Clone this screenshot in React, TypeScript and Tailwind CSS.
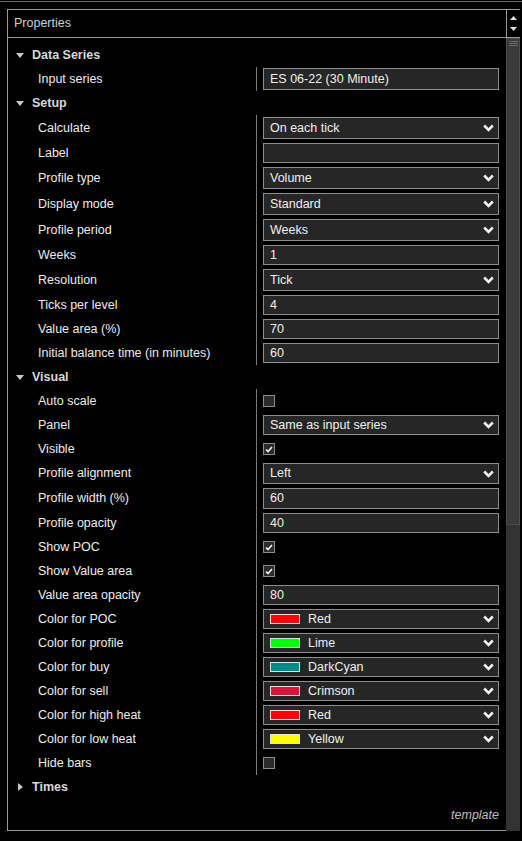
import React from 'react'

type Row =
  | { kind: 'section'; label: string; open: boolean; h: number }
  | { kind: 'text'; label: string; value: string; h: number; box: number }
  | { kind: 'select'; label: string; value: string; h: number; box: number }
  | { kind: 'check'; label: string; checked: boolean; h: number }
  | { kind: 'color'; label: string; value: string; swatch: string; h: number; box: number }

const rows: Row[] = [
  { kind: 'section', label: 'Data Series', open: true, h: 24 },
  { kind: 'text', label: 'Input series', value: 'ES 06-22 (30 Minute)', h: 24, box: 22 },
  { kind: 'section', label: 'Setup', open: true, h: 24 },
  { kind: 'select', label: 'Calculate', value: 'On each tick', h: 26, box: 22 },
  { kind: 'text', label: 'Label', value: '', h: 24, box: 20 },
  { kind: 'select', label: 'Profile type', value: 'Volume', h: 26, box: 22 },
  { kind: 'select', label: 'Display mode', value: 'Standard', h: 26, box: 22 },
  { kind: 'select', label: 'Profile period', value: 'Weeks', h: 26, box: 22 },
  { kind: 'text', label: 'Weeks', value: '1', h: 24, box: 20 },
  { kind: 'select', label: 'Resolution', value: 'Tick', h: 26, box: 22 },
  { kind: 'text', label: 'Ticks per level', value: '4', h: 24, box: 20 },
  { kind: 'text', label: 'Value area (%)', value: '70', h: 24, box: 20 },
  { kind: 'text', label: 'Initial balance time (in minutes)', value: '60', h: 24, box: 20 },
  { kind: 'section', label: 'Visual', open: true, h: 24 },
  { kind: 'check', label: 'Auto scale', checked: false, h: 24 },
  { kind: 'select', label: 'Panel', value: 'Same as input series', h: 24, box: 20 },
  { kind: 'check', label: 'Visible', checked: true, h: 24 },
  { kind: 'select', label: 'Profile alignment', value: 'Left', h: 25, box: 21 },
  { kind: 'text', label: 'Profile width (%)', value: '60', h: 25, box: 21 },
  { kind: 'text', label: 'Profile opacity', value: '40', h: 24, box: 20 },
  { kind: 'check', label: 'Show POC', checked: true, h: 24 },
  { kind: 'check', label: 'Show Value area', checked: true, h: 24 },
  { kind: 'text', label: 'Value area opacity', value: '80', h: 24, box: 20 },
  { kind: 'color', label: 'Color for POC', value: 'Red', swatch: '#ff0000', h: 24, box: 20 },
  { kind: 'color', label: 'Color for profile', value: 'Lime', swatch: '#00ff00', h: 24, box: 20 },
  { kind: 'color', label: 'Color for buy', value: 'DarkCyan', swatch: '#008b8b', h: 24, box: 20 },
  { kind: 'color', label: 'Color for sell', value: 'Crimson', swatch: '#dc143c', h: 24, box: 20 },
  { kind: 'color', label: 'Color for high heat', value: 'Red', swatch: '#ff0000', h: 24, box: 20 },
  { kind: 'color', label: 'Color for low heat', value: 'Yellow', swatch: '#ffff00', h: 24, box: 20 },
  { kind: 'check', label: 'Hide bars', checked: false, h: 24 },
  { kind: 'section', label: 'Times', open: false, h: 24 },
]

const Chevron = () => (
  <svg width="11" height="8" viewBox="0 0 11 8" className="shrink-0">
    <polyline points="1.2,1.5 5.5,5.8 9.8,1.5" fill="none" stroke="#f2f2f2" strokeWidth="2.6" />
  </svg>
)

const Triangle = ({ open }: { open: boolean }) =>
  open ? (
    <svg width="8" height="5" viewBox="0 0 8 5">
      <polygon points="0,0 8,0 4,5" fill="#c8c8c8" />
    </svg>
  ) : (
    <svg width="5" height="8" viewBox="0 0 5 8">
      <polygon points="0,0 5,4 0,8" fill="#c8c8c8" />
    </svg>
  )

const Value = ({ row }: { row: Row }) => {
  if (row.kind === 'check') {
    return (
      <div className="w-[12px] h-[12px] border border-[#8c8c8c] bg-[#2b2b2b] flex items-center justify-center">
        {row.checked ? (
          <svg width="8" height="7" viewBox="0 0 8 7">
            <polyline points="1,3.5 3,5.5 7,1" fill="none" stroke="#f0f0f0" strokeWidth="1.6" />
          </svg>
        ) : null}
      </div>
    )
  }
  if (row.kind === 'section') return null
  return (
    <div
      className="w-[236px] border border-[#8c8c8c] bg-[#262626] flex items-center pl-[6px] pr-[4px] text-[12.5px] text-[#f0f0f0]"
      style={{ height: row.box }}
    >
      {row.kind === 'color' ? (
        <>
          <div className="w-[30px] h-[10px] border border-[#e0e0e0] mr-[8px]" style={{ background: row.swatch }} />
          <span className="flex-1">{row.value}</span>
          <Chevron />
        </>
      ) : (
        <>
          <span className="flex-1">{row.value}</span>
          {row.kind === 'select' ? <Chevron /> : null}
        </>
      )}
    </div>
  )
}

export default function App() {
  return (
    <div className="w-[522px] h-[841px] bg-black overflow-hidden font-['Liberation_Sans',Arial,sans-serif] select-none">
      <div className="mt-px h-px bg-[#6a6a6a]" />
      <div className="ml-[7px] mt-[7px] w-[513px]">
        {/* header */}
        <div className="flex h-[29px] border-y border-[#9a9a9a]">
          <div className="w-[500px] border-l border-r border-[#9a9a9a] flex items-center pl-[6px] text-[12.5px] text-[#cfcfcf]">
            Properties
          </div>
          <div className="flex-1 flex flex-col items-center justify-center gap-[7px] pr-px">
            <svg width="7" height="4" viewBox="0 0 7 4">
              <polygon points="0,4 7,4 3.5,0" fill="#e0e0e0" />
            </svg>
            <svg width="7" height="4" viewBox="0 0 7 4">
              <polygon points="0,0 7,0 3.5,4" fill="#e0e0e0" />
            </svg>
          </div>
        </div>
        {/* body */}
        <div className="flex h-[793px]">
          <div className="w-[499px] border-l border-b border-[#9a9a9a] flex flex-col pt-[5px]">
            {rows.map((row, i) =>
              row.kind === 'section' ? (
                <div key={i} className="flex items-center" style={{ height: row.h }}>
                  <div className="w-[24px] flex justify-center">
                    <Triangle open={row.open} />
                  </div>
                  <span className="text-[12.5px] font-bold text-[#d6d6d6]">{row.label}</span>
                </div>
              ) : (
                <div key={i} className="flex" style={{ height: row.h }}>
                  <div className="w-[248px] pl-[30px] flex items-center text-[12.5px] text-[#ececec] whitespace-nowrap">
                    {row.label}
                  </div>
                  <div className="flex-1 border-l border-[#7a7a7a] pl-[6px] flex items-center">
                    <Value row={row} />
                  </div>
                </div>
              ),
            )}
            <div className="mt-auto pr-[7px] pb-[5px] text-right text-[12.5px] italic text-[#bdbdbd]">template</div>
          </div>
          <div className="w-[14px] h-[793px] bg-[#333333] flex flex-col">
            <div className="h-[487px] bg-[#3a3a3a] border border-[#4e4e4e] flex flex-col items-center gap-[1px] pt-[2px]">
              <div className="w-[9px] h-px bg-[#6a6a6a]" />
              <div className="w-[9px] h-px bg-[#6a6a6a]" />
              <div className="w-[9px] h-px bg-[#6a6a6a]" />
            </div>
          </div>
        </div>
      </div>
    </div>
  )
}
